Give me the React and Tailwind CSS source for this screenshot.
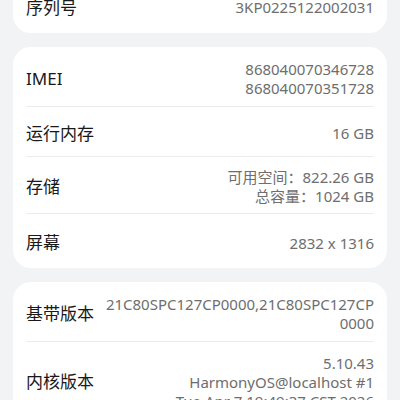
import React from "react";

const font = { fontFamily: '"Noto Sans", "Noto Sans CJK SC", sans-serif' };

function Row({ label, lines, h, divider = true }) {
  return (
    <div className="flex flex-col">
      <div className={`flex items-center justify-between px-[13px] pt-[4px] ${h}`}>
        <span className="text-[17px] text-[#191919] whitespace-nowrap">{label}</span>
        <div className="flex flex-col items-end text-right text-[15px] leading-[19px] text-[#6e6e6e]">
          {lines.map((l, i) => (
            <span key={i} className="whitespace-nowrap">
              {l}
            </span>
          ))}
        </div>
      </div>
      {divider && <div className="mx-[13px] h-px bg-[#ececec]" />}
    </div>
  );
}

export default function App() {
  return (
    <div
      className="w-[400px] h-[400px] overflow-hidden bg-[#f1f3f5] px-[13px]"
      style={font}
    >
      <div className="-mt-[22px] flex flex-col gap-[14px]">
        {/* 序列号 */}
        <div className="rounded-[18px] bg-white">
          <Row label="序列号" lines={["3KP0225122002031"]} h="h-[55px]" divider={false} />
        </div>

        {/* 硬件信息 */}
        <div className="rounded-[18px] bg-white">
          <Row label="IMEI" lines={["868040070346728", "868040070351728"]} h="h-[59px]" />
          <Row label="运行内存" lines={["16 GB"]} h="h-[49px]" />
          <Row
            label="存储"
            lines={["可用空间：822.26 GB", "总容量：1024 GB"]}
            h="h-[56px]"
          />
          <Row label="屏幕" lines={["2832 x 1316"]} h="h-[54px]" divider={false} />
        </div>

        {/* 版本信息 */}
        <div className="rounded-[18px] bg-white">
          <Row
            label="基带版本"
            lines={["21C80SPC127CP0000,21C80SPC127CP", "0000"]}
            h="h-[59px]"
          />
          <Row
            label="内核版本"
            lines={["5.10.43", "HarmonyOS@localhost #1", "Tue Apr 7 19:49:37 CST 2026"]}
            h="h-[76px]"
            divider={false}
          />
        </div>
      </div>
    </div>
  );
}
